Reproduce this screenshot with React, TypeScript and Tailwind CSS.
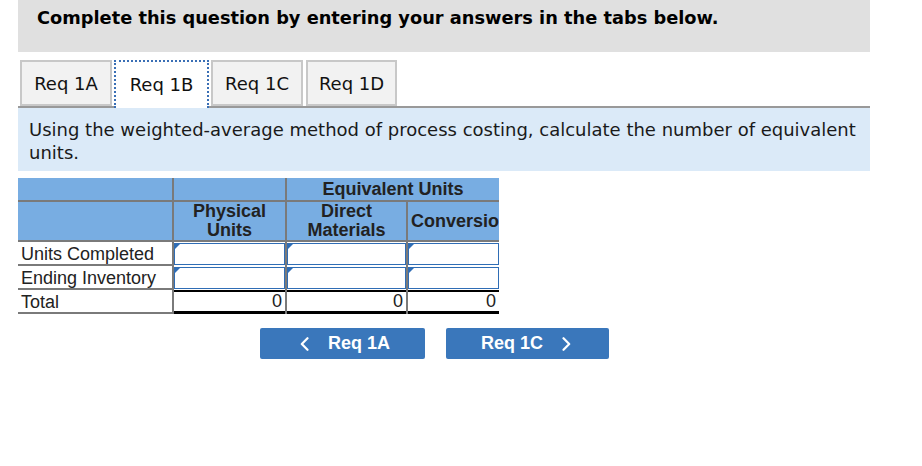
import React from "react";

const verdana = { fontFamily: 'Verdana, "DejaVu Sans", sans-serif' };
const arial = { fontFamily: '"Liberation Sans", Arial, sans-serif' };

function InputCell({ w }: { w: string }) {
  return (
    <div className={`${w} h-[24px] pt-[1px] pb-[1px] bg-white`}>
      <div className="relative h-[22px] border border-[#2f6db5] bg-white">
        <div className="absolute left-0 top-0 w-0 h-0 border-t-[5px] border-t-[#2f6db5] border-r-[5px] border-r-transparent" />
      </div>
    </div>
  );
}

function Sep() {
  return <div className="w-[2px] bg-[#7a7a7a]" />;
}

function TotalCell({ w }: { w: string }) {
  return (
    <div className={`${w} h-[24px] border-t-2 border-t-black border-b-[3px] border-b-black text-right pr-[3px] text-[18px] leading-[19px] text-[#222]`} style={arial}>
      0
    </div>
  );
}

function Label({ children }: { children: React.ReactNode }) {
  return (
    <div className="w-[154px] h-[24px] border-b-2 border-b-[#7a7a7a] pl-[3px] pt-[2px] text-[18px] leading-[20px] text-[#222] whitespace-nowrap overflow-visible">
      {children}
    </div>
  );
}

export default function App() {
  return (
    <div className="w-[922px] h-[466px] bg-white overflow-hidden">
      <div className="ml-[18px] w-[852px]">
        <div className="h-[52px] bg-[#e0e0e0] pl-[19px] pt-[8px]">
          <div className="text-[17.8px] leading-[20px] font-bold text-black" style={verdana}>
            Complete this question by entering your answers in the tabs below.
          </div>
        </div>

        <div className="mt-[8px] flex items-start h-[48px] border-b-2 border-b-[#999]">
          <div className="flex items-start pl-[2px] gap-[2px] h-[48px]">
            <div className="w-[92px] h-[46px] bg-[#f2f2f2] border-2 border-[#c8c8c8] flex items-center justify-center text-[18px] text-[#111]" style={verdana}>Req 1A</div>
            <div className="w-[95px] h-[48px] bg-white border-2 border-dotted border-[#3a6fb5] border-b-0 flex items-center justify-center text-[18px] text-[#111] pb-[2px]" style={verdana}>Req 1B</div>
            <div className="w-[92px] h-[46px] bg-[#f2f2f2] border-2 border-[#c8c8c8] flex items-center justify-center text-[18px] text-[#111]" style={verdana}>Req 1C</div>
            <div className="ml-[1px] w-[91px] h-[46px] bg-[#f2f2f2] border-2 border-[#c8c8c8] flex items-center justify-center text-[18px] text-[#111]" style={verdana}>Req 1D</div>
          </div>
        </div>

        <div className="h-[63px] bg-[#dbeaf8] pl-[11px] pr-[8px] pt-[10px] text-[18px] leading-[23px] text-[#1a1a1a]" style={verdana}>
          Using the weighted-average method of process costing, calculate the number of equivalent units.
        </div>

        <div className="mt-[7px] w-[481px]" style={arial}>
          <div className="grid grid-cols-[154px_111px_119px_91px] grid-rows-[22px_38px] gap-[2px] bg-[#7a7a7a] pb-[2px] text-[18px] font-bold text-[#222] leading-[19px]">
            <div className="bg-[#78ade2]" />
            <div className="bg-[#78ade2]" />
            <div className="col-span-2 bg-[#78ade2] flex items-center justify-center">Equivalent Units</div>
            <div className="bg-[#78ade2]" />
            <div className="bg-[#78ade2] flex items-center justify-center text-center">Physical<br />Units</div>
            <div className="bg-[#78ade2] flex items-center justify-center text-center">Direct<br />Materials</div>
            <div className="bg-[#78ade2] flex items-center overflow-hidden whitespace-nowrap pl-[3px]">Conversion</div>
          </div>

          <div className="flex">
            <Label>Units Completed</Label>
            <Sep />
            <InputCell w="w-[111px]" />
            <Sep />
            <InputCell w="w-[119px]" />
            <Sep />
            <InputCell w="w-[91px]" />
          </div>
          <div className="flex">
            <Label>Ending Inventory</Label>
            <Sep />
            <InputCell w="w-[111px]" />
            <Sep />
            <InputCell w="w-[119px]" />
            <Sep />
            <InputCell w="w-[91px]" />
          </div>
          <div className="flex">
            <Label>Total</Label>
            <Sep />
            <TotalCell w="w-[111px]" />
            <Sep />
            <TotalCell w="w-[119px]" />
            <Sep />
            <TotalCell w="w-[91px]" />
          </div>
        </div>

        <div className="mt-[14px] ml-[242px] flex gap-[21px]">
          <div className="w-[165px] h-[31px] rounded-[2px] bg-[#3a77bb] flex items-center justify-center gap-[19px] pl-[5px] text-white font-bold text-[18px]" style={arial}>
            <svg width="9" height="14" viewBox="0 0 9 14" fill="none"><path d="M7.5 1.2 L1.8 7 L7.5 12.8" stroke="white" strokeWidth="2.2" strokeLinecap="round" strokeLinejoin="round" /></svg>
            <span>Req 1A</span>
          </div>
          <div className="w-[163px] h-[31px] rounded-[2px] bg-[#3a77bb] flex items-center justify-center gap-[19px] pr-[3px] text-white font-bold text-[18px]" style={arial}>
            <span>Req 1C</span>
            <svg width="9" height="14" viewBox="0 0 9 14" fill="none"><path d="M1.5 1.2 L7.2 7 L1.5 12.8" stroke="white" strokeWidth="2.2" strokeLinecap="round" strokeLinejoin="round" /></svg>
          </div>
        </div>
      </div>
    </div>
  );
}
